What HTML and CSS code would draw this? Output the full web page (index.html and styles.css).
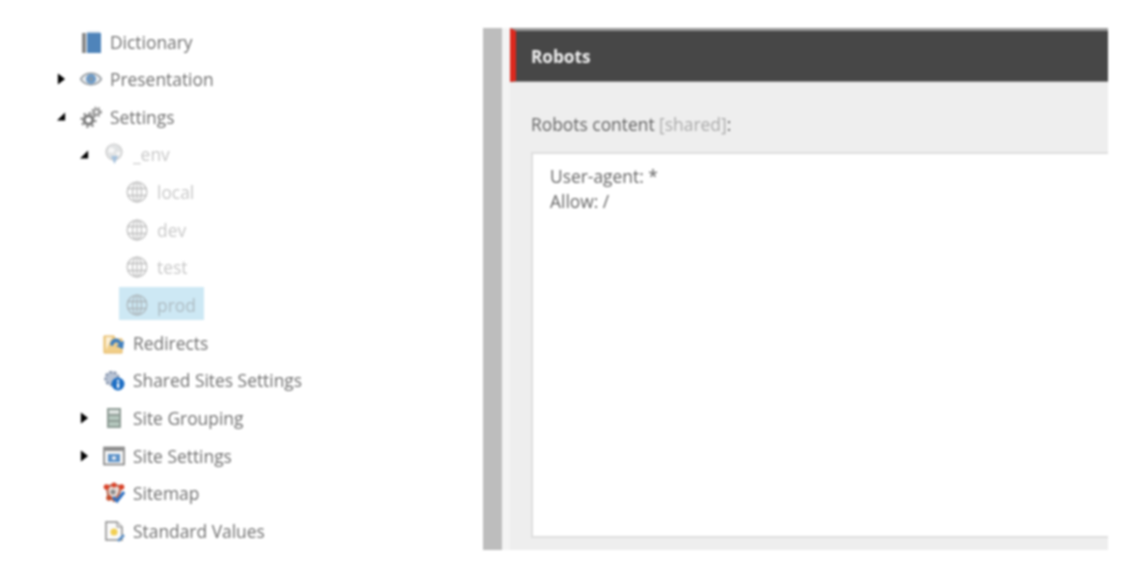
FILE: index.html
```html
<!DOCTYPE html>
<html lang="en">
<head>
<meta charset="utf-8">
<title>Robots</title>
<link rel="stylesheet" href="styles.css">
</head>
<body>
<div class="page">
  <nav class="tree">
    <div class="row l1"><span class="toggle"></span><span class="node">
      <svg class="icon" viewBox="0 0 22 22"><rect x="2" y="2" width="4" height="20" fill="#8a8a8a"/><path d="M6 2 L8 0.500 H20 V2 Z" fill="#c5d6e6"/><rect x="7" y="2" width="14" height="20" fill="#4f84ba"/></svg>
      <span class="label">Dictionary</span></span></div>
    <div class="row l1"><span class="toggle"><svg viewBox="0 0 10 12"><polygon points="1,0 9,6 1,12" fill="#000"/></svg></span><span class="node">
      <svg class="icon" viewBox="0 0 22 22"><path d="M0.500 11 C5 3.500 17 3.500 21.500 11 C17 18.500 5 18.500 0.500 11 Z" fill="#e8ebee" stroke="#9a9fa3" stroke-width="1.600"/><circle cx="11" cy="11" r="5" fill="#6d9bc8"/><circle cx="11" cy="11" r="2" fill="#8496a8"/></svg>
      <span class="label">Presentation</span></span></div>
    <div class="row l1"><span class="toggle"><svg viewBox="0 0 10 12"><polygon points="9,1 9,10 0,10" fill="#000"/></svg></span><span class="node">
      <svg class="icon" viewBox="0 0 22 22"><circle cx="8.500" cy="14" r="4.300" fill="none" stroke="#7a7a7a" stroke-width="3"/><circle cx="8.500" cy="14" r="7" fill="none" stroke="#7a7a7a" stroke-width="2" stroke-dasharray="2.200 3.300"/><circle cx="16.500" cy="6" r="2.800" fill="none" stroke="#949494" stroke-width="2"/><circle cx="16.500" cy="6" r="4.600" fill="none" stroke="#949494" stroke-width="1.600" stroke-dasharray="1.800 2"/></svg>
      <span class="label">Settings</span></span></div>
    <div class="row l2 off"><span class="toggle"><svg viewBox="0 0 10 12"><polygon points="9,1 9,10 0,10" fill="#000"/></svg></span><span class="node">
      <svg class="icon dim" viewBox="0 0 22 22"><circle cx="11" cy="9" r="8" fill="#cfd2d4" stroke="#aaa" stroke-width="1.200"/><path d="M7 4 L12 6 L10 10 L5 9 Z M13 9 L18 9 L15 14 Z" fill="#f4f4f4"/><path d="M8 13 H15 L11.500 21 Z" fill="#6d9bc8"/></svg>
      <span class="label">_env</span></span></div>
    <div class="row l3 off"><span class="toggle"></span><span class="node">
      <svg class="icon dim" viewBox="0 0 22 22"><use href="#globe"/></svg>
      <span class="label">local</span></span></div>
    <div class="row l3 off"><span class="toggle"></span><span class="node">
      <svg class="icon dim" viewBox="0 0 22 22"><use href="#globe"/></svg>
      <span class="label">dev</span></span></div>
    <div class="row l3 off"><span class="toggle"></span><span class="node">
      <svg class="icon dim" viewBox="0 0 22 22"><use href="#globe"/></svg>
      <span class="label">test</span></span></div>
    <div class="row l3 off"><span class="toggle"></span><span class="node selected">
      <svg class="icon dim" viewBox="0 0 22 22"><use href="#globe"/></svg>
      <span class="label">prod</span></span></div>
    <div class="row l2"><span class="toggle"></span><span class="node">
      <svg class="icon" viewBox="0 0 22 22"><path d="M1 21 V4 H11 L12 7 H19 V21 Z" fill="#f1cf8a" stroke="#e3b55e"/><path d="M3 5 H9 L3 18 Z" fill="#fbf0d8"/><path d="M7 13 C8 5 16 5 18 10 L21 9 L20 17 L13 14 L16 12.500 C14 9.500 11 10 10 14 Z" fill="#3f7fbf"/></svg>
      <span class="label">Redirects</span></span></div>
    <div class="row l2"><span class="toggle"></span><span class="node">
      <svg class="icon" viewBox="0 0 22 22"><circle cx="9" cy="9.500" r="6.500" fill="#b8c3d4" stroke="#8b99b0" stroke-width="2.500" stroke-dasharray="3 1.500"/><circle cx="15" cy="15" r="6.500" fill="#1f6fc4"/><rect x="14" y="14" width="2.200" height="5" fill="#fff"/><rect x="14" y="11" width="2.200" height="2" fill="#fff"/></svg>
      <span class="label">Shared Sites Settings</span></span></div>
    <div class="row l2"><span class="toggle"><svg viewBox="0 0 10 12"><polygon points="1,0 9,6 1,12" fill="#000"/></svg></span><span class="node">
      <svg class="icon" viewBox="0 0 22 22"><rect x="4" y="1" width="14" height="20" fill="#8f9c96"/><rect x="6" y="3" width="10" height="4" fill="#dde3e0"/><rect x="6" y="9" width="10" height="4" fill="#b4c7bd"/><rect x="6" y="15" width="10" height="4" fill="#b4c7bd"/></svg>
      <span class="label">Site Grouping</span></span></div>
    <div class="row l2"><span class="toggle"><svg viewBox="0 0 10 12"><polygon points="1,0 9,6 1,12" fill="#000"/></svg></span><span class="node">
      <svg class="icon" viewBox="0 0 22 22"><rect x="1" y="2.500" width="20" height="17" fill="#f4f4f4" stroke="#808080" stroke-width="1.600"/><rect x="2" y="3" width="18" height="3" fill="#909090"/><rect x="5" y="9" width="12" height="8" fill="#5e93c9"/><circle cx="11" cy="13" r="2" fill="#e8eef5"/></svg>
      <span class="label">Site Settings</span></span></div>
    <div class="row l2"><span class="toggle"></span><span class="node">
      <svg class="icon" viewBox="0 0 22 22"><path d="M4 5 L11 2 L18 5 L16 12 L11 19 L5 13 Z" fill="#e9dcd6" stroke="#b5614a" stroke-width="2"/><circle cx="3.500" cy="5" r="2.800" fill="#d9432a"/><circle cx="11" cy="3" r="2.500" fill="#d9432a"/><circle cx="18.500" cy="5" r="2.800" fill="#d9432a"/><circle cx="6" cy="16" r="2.800" fill="#c4502f"/><circle cx="10" cy="10" r="2.500" fill="#8a8a8a"/><path d="M10 15 L14 19 L21 10" fill="none" stroke="#2c6fc0" stroke-width="3"/></svg>
      <span class="label">Sitemap</span></span></div>
    <div class="row l2"><span class="toggle"></span><span class="node">
      <svg class="icon" viewBox="0 0 22 22"><path d="M3 2 H14 L19 7 V20 H3 Z" fill="#fafafa" stroke="#8a8a8a" stroke-width="1.500"/><path d="M14 2 V7 H19" fill="#e8e8e8" stroke="#8a8a8a"/><circle cx="11" cy="12" r="3.500" fill="#f2cf52"/><path d="M15 21 L21 15" stroke="#5b8fc6" stroke-width="2.500"/></svg>
      <span class="label">Standard Values</span></span></div>
  </nav>
  <main class="panel">
    <div class="rail"></div>
    <div class="gutter"></div>
    <section class="content">
      <header class="head"><h1 class="title">Robots</h1></header>
      <div class="body">
        <div class="field-label">Robots content <span class="muted">[shared]</span>:</div>
        <div class="textbox">User-agent: *<br>Allow: /</div>
      </div>
    </section>
  </main>
</div>
<svg class="defs" width="0" height="0"><defs><g id="globe" fill="none" stroke="#9a9a9a" stroke-width="1.300"><circle cx="11" cy="11" r="9.800"/><ellipse cx="11" cy="11" rx="4.500" ry="9.800"/><path d="M11 1 V21 M1.500 7.500 H20.500 M1.500 14.500 H20.500"/></g></defs></svg>
</body>
</html>
```
FILE: styles.css
```css
html, body {
  margin: 0;
  padding: 0;
  background: #fff;
}
.page {
  display: flex;
  width: 1148px;
  height: 572px;
  overflow: hidden;
  font-family: "Open Sans", "Liberation Sans", sans-serif;
  font-size: 17.4px;
  filter: blur(0.8px);
}
.tree {
  width: 483px;
  flex: none;
  padding-top: 23px;
  box-sizing: border-box;
}
.row {
  display: flex;
  align-items: center;
  height: 37.65px;
  color: #707070;
}
.l1 { padding-left: 57px; }
.l2 { padding-left: 80px; }
.l3 { padding-left: 103px; }
.toggle {
  width: 16px;
  height: 12px;
  flex: none;
  display: block;
}
.toggle svg {
  width: 9px;
  height: 12px;
  display: block;
}
.node {
  display: flex;
  align-items: center;
  gap: 8px;
  height: 33px;
  box-sizing: border-box;
  align-self: flex-start;
  margin-top: 1px;
  padding: 2px 8px 0 7px;
}
.icon {
  width: 22px;
  height: 22px;
  flex: none;
}
.label {
  white-space: nowrap;
}
.l3 .label { margin-left: 1px; }
.off { color: #c8c8c8; }
.dim { opacity: .62; }
.selected { background: #cde8f4; }
.selected .label { color: #aebcc3; }
.panel {
  display: flex;
  width: 625px;
  height: 522px;
  margin-top: 28px;
  flex: none;
}
.rail {
  width: 19px;
  background: #bdbdbd;
}
.gutter {
  width: 8px;
  background: #f4f4f4;
}
.content {
  flex: 1;
  display: flex;
  flex-direction: column;
  background: #eeeeee;
  min-width: 0;
}
.head {
  height: 54px;
  box-sizing: border-box;
  background: #474747;
  border-top: 3px solid #999;
  border-left: 6px solid #dc291e;
  border-bottom: 1px solid #8c8c8c;
  display: flex;
  align-items: center;
  padding-left: 15px;
}
.title {
  margin: 0;
  font-size: 17.2px;
  font-weight: 700;
  color: #f0f0f0;
}
.body {
  flex: 1;
  padding: 30px 0 12px 21px;
  display: flex;
  flex-direction: column;
}
.field-label {
  color: #636363;
  height: 40px;
  line-height: 24px;
}
.muted { color: #aaa; }
.textbox {
  flex: 1;
  background: #fff;
  border: 2px solid #dedede;
  border-right: 0;
  padding: 10px 17px;
  color: #666;
  line-height: 25px;
}
.defs {
  position: absolute;
}
```
